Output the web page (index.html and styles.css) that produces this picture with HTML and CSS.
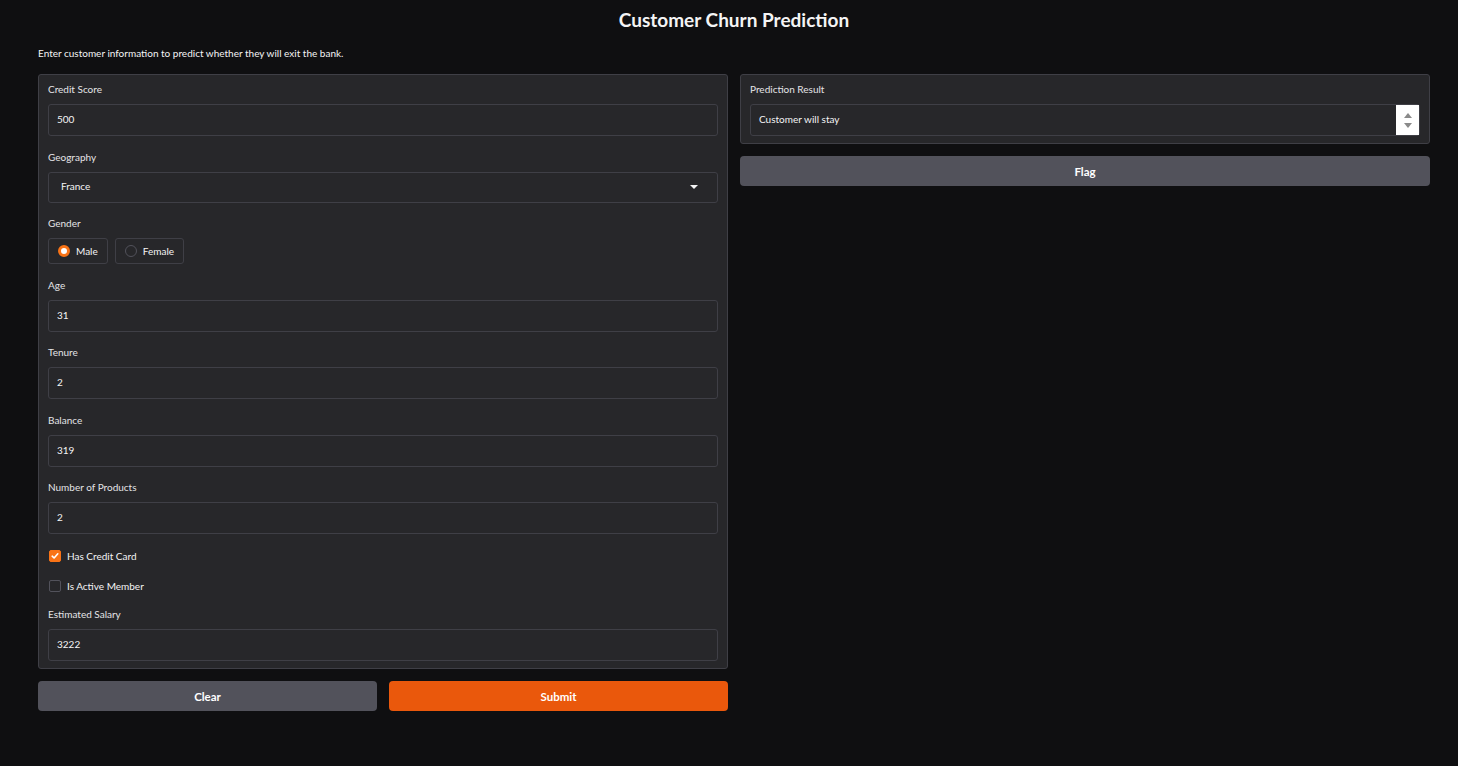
FILE: index.html
```html
<!DOCTYPE html>
<html>
<head>
<meta charset="utf-8">
<link rel="stylesheet" href="styles.css">
</head>
<body>
<div class="page">
  <h1 class="title">Customer Churn Prediction</h1>
  <p class="desc">Enter customer information to predict whether they will exit the bank.</p>
  <div class="cols">
    <div class="col">
      <div class="panel">
        <div class="field">
          <div class="label">Credit Score</div>
          <div class="input">500</div>
        </div>
        <div class="field">
          <div class="label">Geography</div>
          <div class="input select"><span>France</span><span class="caret"></span></div>
        </div>
        <div class="field">
          <div class="label">Gender</div>
          <div class="radios">
            <div class="radio"><span class="dot on"></span>Male</div>
            <div class="radio"><span class="dot"></span>Female</div>
          </div>
        </div>
        <div class="field">
          <div class="label">Age</div>
          <div class="input">31</div>
        </div>
        <div class="field">
          <div class="label">Tenure</div>
          <div class="input">2</div>
        </div>
        <div class="field">
          <div class="label">Balance</div>
          <div class="input">319</div>
        </div>
        <div class="field">
          <div class="label">Number of Products</div>
          <div class="input">2</div>
        </div>
        <div class="check"><span class="box on"><svg width="10" height="10" viewBox="0 0 10 10"><path d="M2.2 5.2 L4.1 7 L7.8 2.8" fill="none" stroke="#fff" stroke-width="1.6" stroke-linecap="round" stroke-linejoin="round"/></svg></span>Has Credit Card</div>
        <div class="check last"><span class="box"></span>Is Active Member</div>
        <div class="field">
          <div class="label">Estimated Salary</div>
          <div class="input">3222</div>
        </div>
      </div>
      <div class="btnrow">
        <div class="btn secondary">Clear</div>
        <div class="btn primary">Submit</div>
      </div>
    </div>
    <div class="col">
      <div class="panel">
        <div class="field">
          <div class="label">Prediction Result</div>
          <div class="input result"><span>Customer will stay</span>
            <span class="spin"><svg width="12" height="26" viewBox="0 0 12 26"><path d="M2 11 L6 6 L10 11 Z" fill="#8a8a8a"/><path d="M2 16 L10 16 L6 21 Z" fill="#8a8a8a"/></svg></span>
          </div>
        </div>
      </div>
      <div class="btn secondary flag">Flag</div>
    </div>
  </div>
</div>
</body>
</html>
```
FILE: styles.css
```css
* { box-sizing: border-box; }
html, body { margin: 0; padding: 0; background: #0f0f11; }
body { font-family: "Source Sans Pro", Lato, "Noto Sans", sans-serif; color: #f4f4f5; }
.page { padding: 0 28px 0 38px; }
.title { margin: 0; padding-top: 9px; height: 40px; text-align: center; font-size: 19px; font-weight: 700; line-height: 22px; color: #f4f4f5; }
.desc { margin: 4px 0 0; font-size: 10px; line-height: 18px; height: 30px; }
.cols { display: flex; gap: 12px; align-items: flex-start; }
.col { flex: 1; display: flex; flex-direction: column; gap: 12px; }
.panel { background: #27272a; border: 1px solid #3f3f46; border-radius: 3px; padding: 6px 9px 7px; display: flex; flex-direction: column; gap: 12.5px; }
.field { display: flex; flex-direction: column; gap: 5px; }
.label { font-size: 10px; line-height: 17px; height: 18px; color: #e4e4e7; }
.input { height: 32px; background: #27272a; border: 1px solid #3f3f46; border-radius: 3px; padding: 0 8px 2px; display: flex; align-items: center; font-size: 10px; color: #f4f4f5; }
.select { height: 31px; justify-content: space-between; padding: 0 19px 2px 12px; }
.caret { width: 0; height: 0; border-left: 4px solid transparent; border-right: 4px solid transparent; border-top: 4px solid #f4f4f5; margin-top: 2px; }
.radios { display: flex; gap: 7px; }
.radio { height: 26px; border: 1px solid #3f3f46; border-radius: 3px; padding: 0 9px; display: flex; align-items: center; gap: 6px; font-size: 10px; }
.dot { width: 12px; height: 12px; border-radius: 50%; border: 1px solid #52525b; background: #27272a; }
.dot.on { background: #fff; border: 3.5px solid #f97316; }
.check { display: flex; align-items: center; gap: 6px; font-size: 10px; height: 18px; padding-left: 1px; }
.check.last { margin-bottom: -1.5px; }
.box { width: 12px; height: 12px; border-radius: 2px; border: 1px solid #52525b; display: flex; align-items: center; justify-content: center; }
.box.on { background: #f97316; border-color: #f97316; }
.btnrow { display: flex; gap: 12px; }
.btn { flex: 1; height: 30px; border-radius: 4px; display: flex; align-items: center; justify-content: center; font-size: 11.5px; font-weight: 700; color: #fff; }
.secondary { background: #52525b; }
.primary { background: #ea580c; }
.flag { flex: none; }
.result { justify-content: space-between; padding-right: 0; padding-bottom: 0; }
.result span:first-child { margin-bottom: 2px; }
.spin { width: 23px; height: 30px; background: #fff; display: flex; align-items: center; justify-content: center; }
```
